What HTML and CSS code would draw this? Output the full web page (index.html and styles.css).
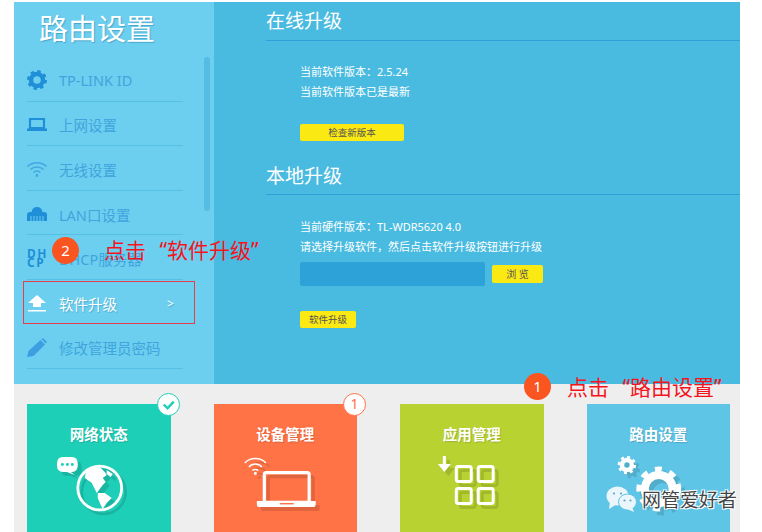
FILE: index.html
```html
<!DOCTYPE html>
<html lang="zh-CN">
<head>
    <meta charset="UTF-8">
    <title>路由设置</title>
    <link rel="stylesheet" href="styles.css">
</head>
<body>
    <div class="screen">
        <div class="panel">
            <aside class="sidebar">
                <h1 class="sidebar-title">路由设置</h1>
                <ul class="nav">
                    <li class="nav-item">
                        <svg class="nav-icon" viewBox="0 0 20 20"><circle cx="10" cy="10" r="6" fill="none" stroke="#1f8fd8" stroke-width="4.4"/><circle cx="10" cy="10" r="8.6" fill="none" stroke="#1f8fd8" stroke-width="2.8" stroke-dasharray="3.4 3.35"/></svg>
                        <span>TP-LINK ID</span>
                    </li>
                    <li class="nav-item">
                        <svg class="nav-icon" viewBox="0 0 20 20"><path d="M3 4h14v9H3z" fill="none" stroke="#1f8fd8" stroke-width="2.2"/><path d="M0 13.500h20V16H0z" fill="#1f8fd8"/></svg>
                        <span>上网设置</span>
                    </li>
                    <li class="nav-item">
                        <svg class="nav-icon" viewBox="0 0 20 20" fill="none" stroke="#3fa8e0" stroke-width="1.600"><path d="M.5 7.500C5.500 2.500 14.500 2.500 19.500 7.500"/><path d="M3.500 10.500C7 7.200 13 7.200 16.500 10.500"/><path d="M6.500 13.500C8.500 11.800 11.500 11.800 13.500 13.500"/><circle cx="10" cy="16.500" r="1.400" fill="#3fa8e0" stroke="none"/></svg>
                        <span>无线设置</span>
                    </li>
                    <li class="nav-item">
                        <svg class="nav-icon" viewBox="0 0 20 20"><path d="M0 17V11Q0 8 3 8H4.500Q5.500 3 10 3T15.500 8H17Q20 8 20 11V17Z" fill="#1f8fd8"/><path d="M4 12v5M7 12v5M10 12v5M13 12v5M16 12v5" stroke="#6dcff0" stroke-width="1"/></svg>
                        <span>LAN口设置</span>
                    </li>
                    <li class="nav-item">
                        <span class="nav-icon dhcp">DH<br>CP</span>
                        <span>DHCP服务器</span>
                    </li>
                    <li class="nav-item nav-item-active">
                        <svg class="nav-icon" viewBox="0 0 20 20"><path d="M10 2L19 10H14V14H6V10H1Z" fill="#fff"/><path d="M1 17h18v1.500H1z" fill="#fff"/></svg>
                        <span>软件升级</span>
                        <span class="nav-arrow">&gt;</span>
                    </li>
                    <li class="nav-item">
                        <svg class="nav-icon" viewBox="0 0 20 20"><path d="M0 19L1.500 13L13.500 2L18 6.500L6.500 18Z" fill="#3b9fe0"/><path d="M14.500 1L16 0L20 4L18.800 5.500Z" fill="#3b9fe0"/></svg>
                        <span>修改管理员密码</span>
                    </li>
                </ul>
                <div class="scrollbar"></div>
            </aside>
            <main class="content">
                <h2 class="section-title">在线升级</h2>
                <div class="section-body section-body-first">
                    <p>当前软件版本：2.5.24</p>
                    <p>当前软件版本已是最新</p>
                    <button class="btn btn-check">检查新版本</button>
                </div>
                <h2 class="section-title section-title-next">本地升级</h2>
                <div class="section-body">
                    <p>当前硬件版本：TL-WDR5620 4.0</p>
                    <p>请选择升级软件，然后点击软件升级按钮进行升级</p>
                    <div class="file-row">
                        <div class="file-input"></div>
                        <button class="btn btn-browse">浏 览</button>
                    </div>
                    <button class="btn btn-upgrade">软件升级</button>
                </div>
            </main>
        </div>
        <div class="tiles">
            <div class="tile tile-teal">
                <h3>网络状态</h3>
                <svg class="tile-icon" viewBox="0 0 144 84">
                    <path d="M36 8H45Q51 8 51 15.500Q51 23 45 23H44L48 26L40 23H36Q30 23 30 15.500Q30 8 36 8Z" fill="#fff"/>
                    <circle cx="35.500" cy="15.500" r="1.500" fill="#1ecfb8"/><circle cx="40.500" cy="15.500" r="1.500" fill="#1ecfb8"/><circle cx="45.500" cy="15.500" r="1.500" fill="#1ecfb8"/>
                    <circle cx="73" cy="39" r="22" fill="none" stroke="#fff" stroke-width="2.800"/>
                    <path d="M63 19L73 18L78 23L80 26L76 29L79 33L76 36L73 40L70 44L65 34L58 29L59 23Z" fill="#fff"/>
                    <path d="M71 44L78 44L85 49L80 54L76 60L74 56L71 49Z" fill="#fff"/>
                    <path d="M80 21L86 25L84 28L80 25Z" fill="#fff"/>
                </svg>
            </div>
            <div class="tile tile-orange">
                <h3>设备管理</h3>
                <svg class="tile-icon" viewBox="0 0 144 84">
                    <rect x="50.500" y="23.500" width="45" height="30" rx="2" fill="none" stroke="#fff" stroke-width="3.200"/>
                    <path d="M43 52H102V56Q102 58 100 58H45Q43 58 43 56Z" fill="#fff"/>
                    <path d="M66 54H80V55.500H66Z" fill="#ff7347"/>
                    <g fill="none" stroke="#fff" stroke-width="1.500"><path d="M31 14C36 8 47 8 52 14"/><path d="M35 18C38.500 14 44.500 14 48 18"/><path d="M38.500 21.500C40 20 43 20 44.500 21.500"/></g>
                    <circle cx="41.500" cy="24.500" r="1.500" fill="#fff"/>
                </svg>
            </div>
            <div class="tile tile-green">
                <h3>应用管理</h3>
                <svg class="tile-icon" viewBox="0 0 144 84">
                    <path d="M43 7H46V15H51L44.500 23L38 15H43Z" fill="#fff"/>
                    <g fill="none" stroke="#fff" stroke-width="3"><rect x="56.500" y="17.500" width="15" height="15" rx="2"/><rect x="78.500" y="17.500" width="15" height="15" rx="2"/><rect x="56.500" y="39.500" width="15" height="15" rx="2"/><rect x="78.500" y="39.500" width="15" height="15" rx="2"/></g>
                </svg>
            </div>
            <div class="tile tile-blue">
                <h3>路由设置</h3>
                <svg class="tile-icon" viewBox="0 0 144 84" fill="none" stroke="#fff">
                    <circle cx="40" cy="16" r="5" stroke-width="4.500"/>
                    <circle cx="40" cy="16" r="8" stroke-width="2.500" stroke-dasharray="3 3.280"/>
                    <circle cx="72" cy="40" r="14" stroke-width="8"/>
                    <circle cx="72" cy="40" r="20" stroke-width="5" stroke-dasharray="7 7.960"/>
                </svg>
            </div>
            <div class="badge badge-check">
                <svg viewBox="0 0 20 20"><path d="M5 10L9 14L15.500 7" fill="none" stroke="#1ecfb8" stroke-width="2.600"/></svg>
            </div>
            <div class="badge badge-count">1</div>
        </div>
    </div>

    <div class="select-box"></div>
    <div class="note note-upgrade"><span class="note-num">2</span><span class="note-text">点击 “软件升级”</span></div>
    <div class="note note-settings"><span class="note-num">1</span><span class="note-text">点击 “路由设置”</span></div>

    <div class="watermark">
        <svg viewBox="0 0 31 26"><ellipse cx="11.500" cy="10" rx="11" ry="9.500" fill="#eaf6fb"/><path d="M4 15L3 23L11 18Z" fill="#eaf6fb"/><ellipse cx="21.500" cy="16" rx="9" ry="8" fill="#eaf6fb" stroke="#5ec5e6"/><path d="M26 21L28 26L21 23Z" fill="#eaf6fb"/><circle cx="8" cy="7.500" r="1.100" fill="#5ea9c4"/><circle cx="15" cy="7.500" r="1.100" fill="#5ea9c4"/><circle cx="18.500" cy="14.500" r="1.100" fill="#5ea9c4"/><circle cx="24.500" cy="14.500" r="1.100" fill="#5ea9c4"/></svg>
        <span>网管爱好者</span>
    </div>
</body>
</html>
```

FILE: styles.css
```css
* {
    box-sizing: border-box;
}
html, body {
    height: 100%;
}
body {
    margin: 0;
    padding: 2px 22px 0 14px;
    background-color: white;
    font-family: "Noto Sans", "Noto Sans CJK SC", sans-serif;
    overflow: hidden;
    position: relative;
}
.screen {
    height: 530px;
    background-color: #eeeeee;
    overflow: hidden;
}
.panel {
    display: flex;
    height: 382px;
    background-color: #4abbe0;
}
.sidebar {
    width: 200px;
    flex-shrink: 0;
    position: relative;
    background-color: #6dcff0;
}
.sidebar-title {
    margin: 0;
    height: 55px;
    padding-left: 25px;
    color: white;
    font-size: 29px;
    font-weight: 400;
    line-height: 54px;
    text-shadow: 1px 1px 1px rgba(0, 90, 130, 0.35);
}
.nav {
    list-style: none;
    margin: 0 0 0 13px;
    padding: 0;
    width: 156px;
}
.nav-item {
    display: flex;
    align-items: center;
    height: 44.6px;
    padding-top: 3px;
    border-bottom: 1px solid #55c0e6;
    color: #3fa5dc;
    font-size: 14.500px;
}
.nav-icon {
    width: 20px;
    height: 20px;
    margin-right: 12px;
    flex-shrink: 0;
}
.dhcp {
    color: #1f8fd8;
    font-size: 12px;
    font-weight: 700;
    line-height: 9px;
    letter-spacing: 1.500px;
}
.nav-item-active {
    color: white;
    border-bottom-color: transparent;
    text-shadow: 1px 1px 1px rgba(0, 90, 130, 0.3);
}
.nav-arrow {
    margin-left: 50px;
    font-size: 12px;
}
.scrollbar {
    position: absolute;
    left: 190px;
    top: 55px;
    width: 6px;
    height: 154px;
    border-radius: 3px;
    background-color: #55bde3;
}
.content {
    flex: 1;
    padding-left: 52px;
    color: white;
}
.section-title {
    margin: 0;
    height: 39px;
    border-bottom: 1px solid #2f9fd8;
    font-size: 19px;
    font-weight: 400;
    line-height: 39px;
}
.section-title-next {
    height: 38px;
    margin-top: 16px;
    line-height: 38px;
}
.section-body {
    padding: 22px 0 0 34px;
    font-size: 11px;
}
.section-body-first {
    padding-top: 21px;
}
.section-body p {
    margin: 0;
    line-height: 20px;
}
.btn {
    display: block;
    padding: 0;
    border: none;
    border-radius: 2px;
    height: 17px;
    background-color: #fbe914;
    color: #555;
    font-family: inherit;
    font-size: 9.500px;
    line-height: 17px;
}
.btn-check {
    width: 104px;
    margin-top: 22px;
}
.file-row {
    display: flex;
    align-items: center;
    gap: 7px;
    margin-top: 5px;
}
.file-input {
    width: 185px;
    height: 24px;
    border-radius: 2px;
    background-color: #2ca2d8;
}
.btn-browse {
    width: 51px;
    height: 18px;
    font-size: 10px;
}
.btn-upgrade {
    width: 56px;
    margin-top: 25px;
}
.tiles {
    display: grid;
    grid-template-columns: repeat(4, minmax(0, 1fr));
    column-gap: 43px;
    position: relative;
    padding: 20px 10px 0 13px;
}
.tile {
    height: 130px;
    color: white;
    text-align: center;
}
.tile h3 {
    margin: 0;
    height: 45px;
    padding-top: 20px;
    font-size: 14.500px;
    font-weight: 700;
    line-height: 20px;
    text-shadow: 1px 1px 1px rgba(0, 0, 0, 0.15);
}
.tile-icon {
    display: block;
    width: 100%;
    height: 84px;
    filter: drop-shadow(4px 4px 0 rgba(0, 0, 0, 0.12));
}
.tile-teal {
    background-color: #1ecfb8;
}
.tile-orange {
    background-color: #ff7347;
}
.tile-green {
    background-color: #b8d232;
}
.tile-blue {
    background-color: #5ec5e6;
}
.badge {
    position: absolute;
    top: 9px;
    width: 23px;
    height: 23px;
    border-radius: 50%;
    background-color: white;
    text-align: center;
}
.badge svg {
    display: block;
    width: 19px;
    height: 19px;
    margin: 1px;
}
.badge-check {
    left: 143px;
    border: 1px solid #1ecfb8;
}
.badge-count {
    left: 329px;
    border: 1px solid #ff7347;
    color: #ff7347;
    font-size: 14px;
    line-height: 20px;
}
.select-box {
    position: absolute;
    left: 23px;
    top: 281px;
    width: 172px;
    height: 43px;
    border: 1px solid #e5404a;
}
.note {
    position: absolute;
    display: flex;
    align-items: flex-start;
    color: #f5141e;
    font-size: 21px;
    line-height: 27px;
    word-spacing: 8px;
}
.note-num {
    width: 27px;
    height: 27px;
    border-radius: 50%;
    background-color: #fa5420;
    color: white;
    font-size: 15px;
    line-height: 27px;
    text-align: center;
}
.note-upgrade {
    left: 52px;
    top: 237px;
    gap: 25px;
}
.note-settings {
    left: 524px;
    top: 373px;
    gap: 16px;
}
.note-settings .note-text {
    margin-top: 1px;
}
.watermark {
    position: absolute;
    left: 606px;
    top: 485px;
    display: flex;
    align-items: center;
    gap: 5px;
    color: #444;
    font-size: 19px;
}
.watermark svg {
    width: 31px;
    height: 26px;
}
.watermark span {
    text-shadow: 1px 1px 0 white, -1px -1px 0 white, 1px -1px 0 white, -1px 1px 0 white;
}
```
